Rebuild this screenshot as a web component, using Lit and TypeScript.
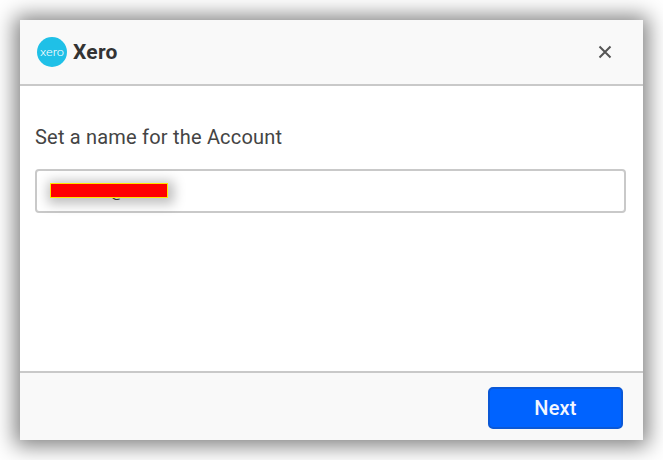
import { LitElement, html, css } from "lit";
import { customElement } from "lit/decorators.js";

@customElement("app-root")
export class AppRoot extends LitElement {
  static styles = css`
    :host {
      display: block;
      width: 663px;
      height: 460px;
      box-sizing: border-box;
      padding: 20px;
      background: #fff;
      font-family: Roboto, "Liberation Sans", sans-serif;
      overflow: hidden;
    }
    .dialog {
      height: 420px;
      display: flex;
      flex-direction: column;
      background: #fff;
      box-shadow: 0 1px 20px 5px rgba(0, 0, 0, 0.5);
    }
    .header {
      height: 64px;
      flex: none;
      box-sizing: content-box;
      display: flex;
      align-items: center;
      padding: 0 31px 0 17px;
      background: #f9f9f9;
      border-bottom: 2px solid #c9c9c9;
    }
    .logo {
      width: 30px;
      height: 30px;
      flex: none;
      display: block;
    }
    .title {
      margin-left: 6px;
      font-size: 21px;
      font-weight: 700;
      color: #333;
      letter-spacing: 0.25px;
      flex: 1;
    }
    .close {
      width: 14px;
      height: 14px;
      display: block;
    }
    .body {
      flex: 1;
      padding: 39px 17px 0 15px;
      background: #fff;
    }
    .label {
      font-size: 20px;
      line-height: 24px;
      color: #444;
      letter-spacing: 0.2px;
    }
    .field {
      position: relative;
      margin-top: 20px;
      height: 44px;
      box-sizing: border-box;
      border: 2px solid #c9c9c9;
      border-radius: 4px;
      display: flex;
      align-items: center;
      padding-left: 14px;
      font-size: 16px;
      color: #444;
      background: #fff;
    }
    .redact {
      position: absolute;
      left: 13px;
      top: 12px;
      width: 118px;
      height: 15px;
      box-sizing: border-box;
      background: #f00;
      border: 1px solid #ffe600;
      box-shadow: 2px 2px 12px 4px rgba(0, 0, 0, 0.25);
    }
    .value {
      padding-left: 59px;
    }
    .footer {
      height: 69px;
      box-sizing: border-box;
      flex: none;
      display: flex;
      align-items: center;
      justify-content: flex-end;
      padding: 3px 20px 0 0;
      background: #f9f9f9;
      border-top: 2px solid #c9c9c9;
    }
    .next {
      width: 135px;
      height: 42px;
      box-sizing: border-box;
      background: #0063ff;
      border: 2px solid #0b58d6;
      border-radius: 5px;
      color: #f2f6ff;
      font: 500 20px Roboto, "Liberation Sans", sans-serif;
      letter-spacing: 0.2px;
      padding: 0;
    }
  `;

  render() {
    return html`
      <div class="dialog">
        <div class="header">
          <svg class="logo" viewBox="0 0 30 30">
            <circle cx="15" cy="15" r="15" fill="#1fc0e7"></circle>
            <text x="3" y="18.5" textLength="24" lengthAdjust="spacingAndGlyphs" font-family="Roboto, sans-serif" font-size="11" font-weight="300" fill="#fff">xero</text>
          </svg>
          <div class="title">Xero</div>
          <svg class="close" viewBox="0 0 14 14">
            <path d="M1.5 1.5 L12.5 12.5 M12.5 1.5 L1.5 12.5" stroke="#555" stroke-width="2" fill="none"></path>
          </svg>
        </div>
        <div class="body">
          <div class="label">Set a name for the Account</div>
          <div class="field">
            <span class="value">@</span>
            <div class="redact"></div>
          </div>
        </div>
        <div class="footer">
          <button class="next">Next</button>
        </div>
      </div>
    `;
  }
}
